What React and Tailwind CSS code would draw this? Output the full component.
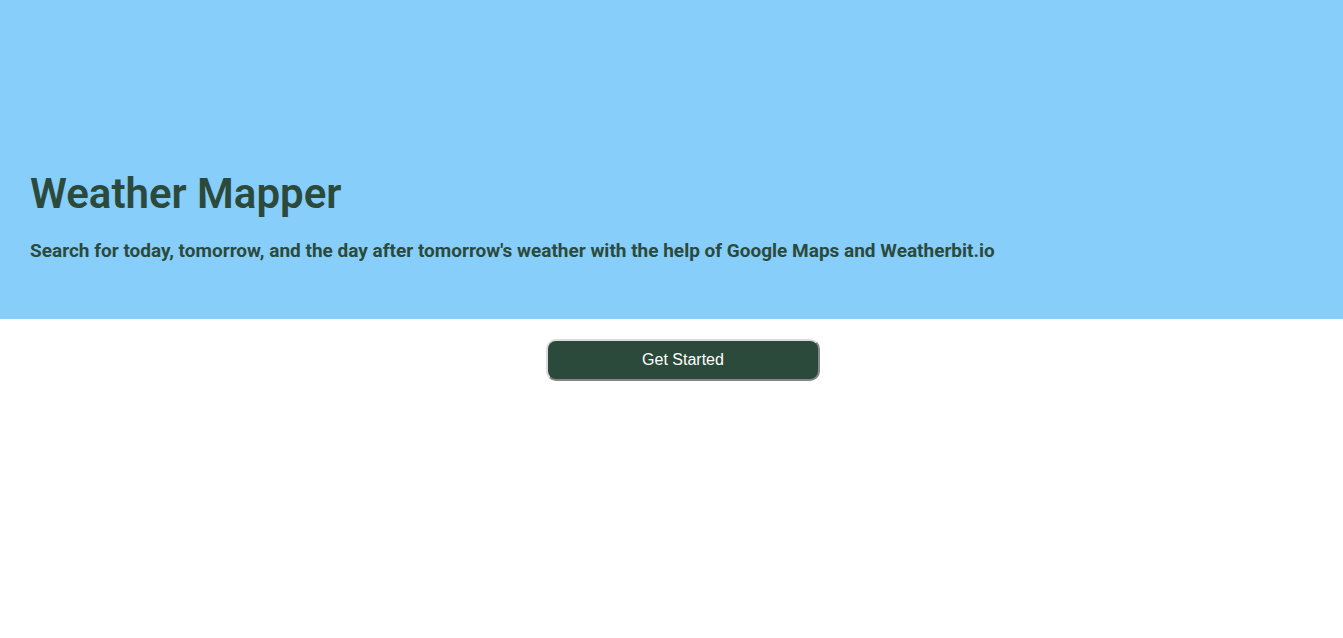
export default function App() {
  return (
    <div className="min-h-screen bg-white font-['Roboto',sans-serif] text-[#2c4a3b]">
      <header className="flex h-[50vh] flex-col justify-end bg-[#87cefa] px-[30px] pb-14">
        <h1 className="text-[42px] leading-[50px] font-semibold">Weather Mapper</h1>
        <p className="mt-5 text-[19px] leading-6 font-bold">
          Search for today, tomorrow, and the day after tomorrow's weather with the help of Google Maps and Weatherbit.io
        </p>
      </header>
      <main className="flex justify-center pt-5 pl-[23px]">
        <button
          type="button"
          className="w-[274px] rounded-[10px] border-2 border-t-[#dcdcdc] border-r-[#868686] border-b-[#868686] border-l-[#dcdcdc] bg-[#2c4a3b] py-2 font-['Liberation_Sans',sans-serif] text-base leading-[22px] text-white"
        >
          Get Started
        </button>
      </main>
    </div>
  );
}
